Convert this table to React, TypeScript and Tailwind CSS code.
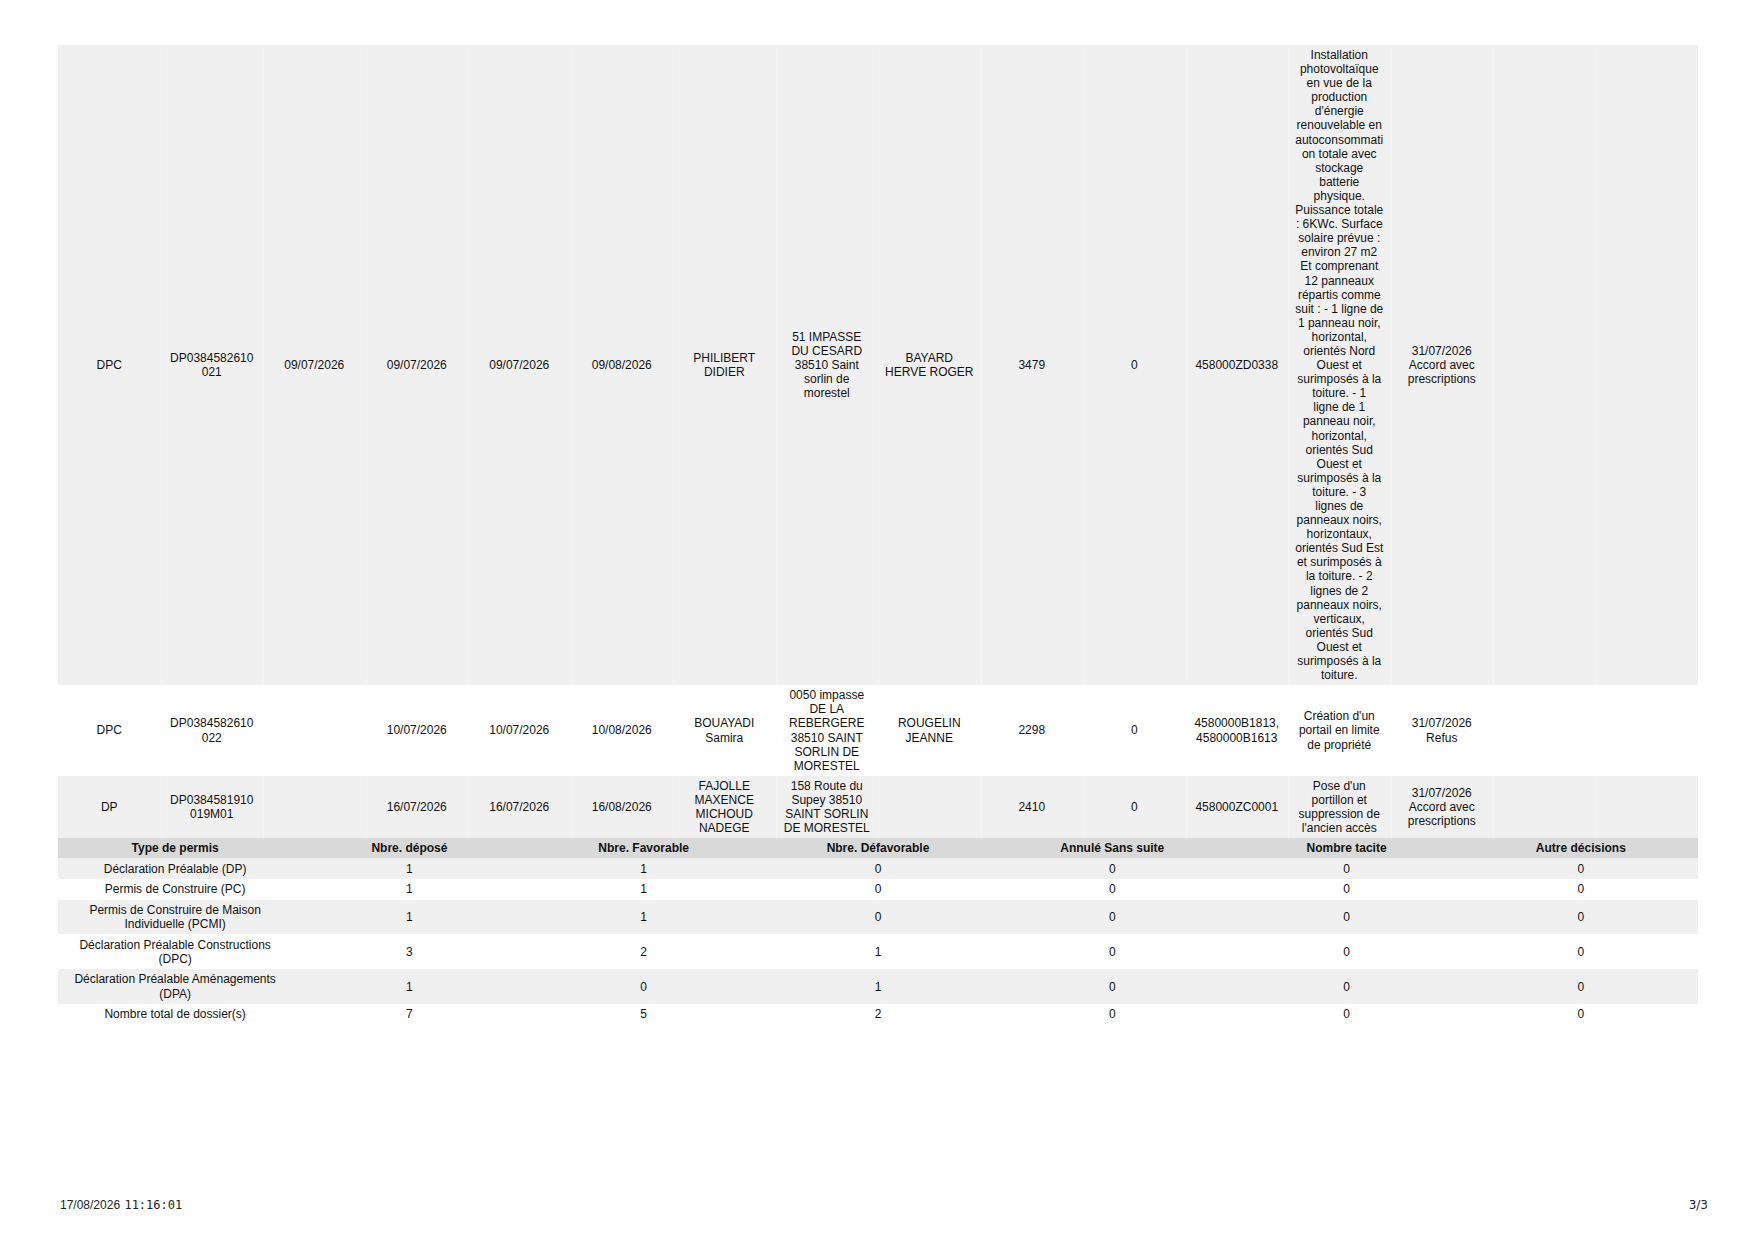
import React from 'react';

type Row = { bg: string; cells: React.ReactNode[] };

// line breaks follow the printed page
const descriptionLines = [
    'Installation', 'photovoltaïque', 'en vue de la', 'production', "d'énergie", 'renouvelable en',
    'autoconsommati', 'on totale avec', 'stockage', 'batterie', 'physique.', 'Puissance totale',
    ': 6KWc. Surface', 'solaire prévue :', 'environ 27 m2', 'Et comprenant', '12 panneaux', 'répartis comme',
    'suit : - 1 ligne de', '1 panneau noir,', 'horizontal,', 'orientés Nord', 'Ouest et', 'surimposés à la',
    'toiture. - 1', 'ligne de 1', 'panneau noir,', 'horizontal,', 'orientés Sud', 'Ouest et',
    'surimposés à la', 'toiture. - 3', 'lignes de', 'panneaux noirs,', 'horizontaux,', 'orientés Sud Est',
    'et surimposés à', 'la toiture. - 2', 'lignes de 2', 'panneaux noirs,', 'verticaux,', 'orientés Sud',
    'Ouest et', 'surimposés à la', 'toiture.',
];

const description = (
    <>
        {descriptionLines.map((l, i) => (
            <span key={i} className="block whitespace-nowrap">{l}</span>
        ))}
    </>
);

const dossiers: Row[] = [
    {
        bg: 'bg-[#f0f0f0]',
        cells: [
            'DPC', 'DP0384582610021', '09/07/2026', '09/07/2026', '09/07/2026', '09/08/2026',
            'PHILIBERT DIDIER', '51 IMPASSE DU CESARD 38510 Saint sorlin de morestel', 'BAYARD HERVE ROGER',
            '3479', '0', '458000ZD0338', description, '31/07/2026 Accord avec prescriptions', '', '',
        ],
    },
    {
        bg: 'bg-white',
        cells: [
            'DPC', 'DP0384582610022', '', '10/07/2026', '10/07/2026', '10/08/2026',
            'BOUAYADI Samira', '0050 impasse DE LA REBERGERE 38510 SAINT SORLIN DE MORESTEL', 'ROUGELIN JEANNE',
            '2298', '0', '4580000B1813, 4580000B1613', "Création d'un portail en limite de propriété", '31/07/2026 Refus', '', '',
        ],
    },
    {
        bg: 'bg-[#f0f0f0]',
        cells: [
            'DP', 'DP0384581910019M01', '', '16/07/2026', '16/07/2026', '16/08/2026',
            'FAJOLLE MAXENCE MICHOUD NADEGE', '158 Route du Supey 38510 SAINT SORLIN DE MORESTEL', '',
            '2410', '0', '458000ZC0001', "Pose d'un portillon et suppression de l'ancien accès", '31/07/2026 Accord avec prescriptions', '', '',
        ],
    },
];

const summaryHead = ['Type de permis', 'Nbre. déposé', 'Nbre. Favorable', 'Nbre. Défavorable', 'Annulé Sans suite', 'Nombre tacite', 'Autre décisions'];

const summary: string[][] = [
    ['Déclaration Préalable (DP)', '1', '1', '0', '0', '0', '0'],
    ['Permis de Construire (PC)', '1', '1', '0', '0', '0', '0'],
    ['Permis de Construire de Maison Individuelle (PCMI)', '1', '1', '0', '0', '0', '0'],
    ['Déclaration Préalable Constructions (DPC)', '3', '2', '1', '0', '0', '0'],
    ['Déclaration Préalable Aménagements (DPA)', '1', '0', '1', '0', '0', '0'],
    ['Nombre total de dossier(s)', '7', '5', '2', '0', '0', '0'],
];

const cell = 'text-center align-middle px-[6.6px] py-[3px] [overflow-wrap:break-word]';

export default function App() {
    return (
        <div
            className="w-[1755px] h-[1242px] bg-white flex flex-col text-[12px] leading-[14.1px] text-[#111]"
            style={{ fontFamily: '"Liberation Sans", Arial, sans-serif' }}
        >
            <div className="pt-[45px] pl-[58px] pr-[57px]">
                {/* Dossiers */}
                <table className="w-[1640px] table-fixed border-collapse">
                    <tbody>
                        {dossiers.map((row, i) => (
                            <tr key={i} className={row.bg}>
                                {row.cells.map((c, j) => (
                                    <td
                                        key={j}
                                        className={`${cell} ${j > 0 && i !== 1 ? 'shadow-[inset_1px_0_0_#f4f4f4]' : ''}`}
                                    >
                                        {c}
                                    </td>
                                ))}
                            </tr>
                        ))}
                    </tbody>
                </table>

                {/* Récapitulatif */}
                <table className="w-[1640px] table-fixed border-collapse">
                    <thead>
                        <tr className="bg-[#d9d9d9]">
                            {summaryHead.map((h) => (
                                <th key={h} className="text-center align-middle font-bold px-[6.6px] py-[3px]">{h}</th>
                            ))}
                        </tr>
                    </thead>
                    <tbody>
                        {summary.map((row, i) => (
                            <tr key={i} className={i % 2 === 0 ? 'bg-[#f0f0f0]' : 'bg-white'}>
                                {row.map((c, j) => (
                                    <td key={j} className="text-center align-middle px-[6.6px] py-[3.3px]">{c}</td>
                                ))}
                            </tr>
                        ))}
                    </tbody>
                </table>
            </div>

            <div className="mt-auto pb-[30px] pl-[60px] pr-[47px] flex justify-between items-center text-[12px] text-[#222]">
                <p>
                    17/08/2026{' '}
                    <span className="ml-[1px]" style={{ fontFamily: '"DejaVu Sans Mono", monospace' }}>11:16:01</span>
                </p>
                <p style={{ fontFamily: '"DejaVu Sans", sans-serif' }}>3/3</p>
            </div>
        </div>
    );
}
